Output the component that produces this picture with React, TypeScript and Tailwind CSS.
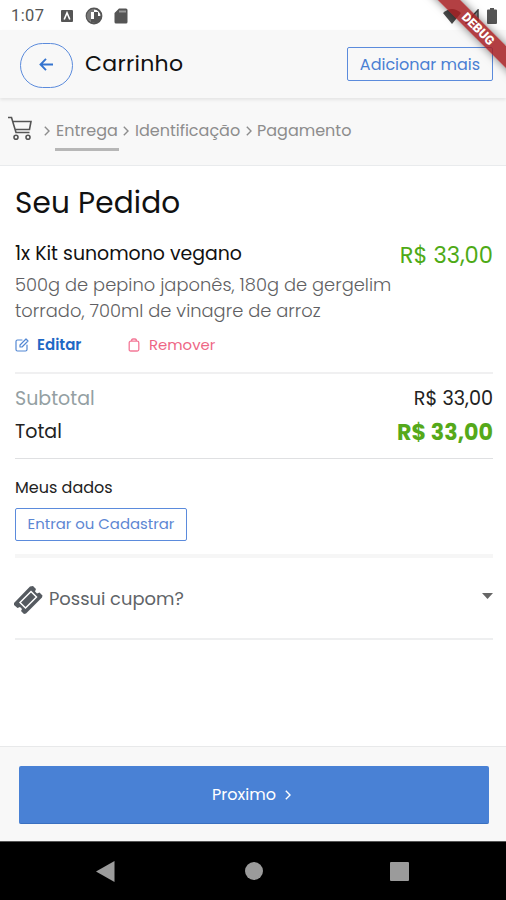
import React from "react";

const Chevron = ({ className = "" }: { className?: string }) => (
  <svg className={className} width="6" height="10" viewBox="0 0 6 10" fill="none" stroke="currentColor" strokeWidth="1.4">
    <path d="M.8.8 5 5 .8 9.2" />
  </svg>
);

function StatusBar() {
  return (
    <div className="flex h-[30px] shrink-0 items-center bg-white pl-[11px] pr-[9px] pt-[2px] text-[#555]">
      <span className="w-[50px] font-['Roboto',sans-serif] text-[16.5px] leading-none tracking-[0.4px]">1:07</span>
      <svg width="12" height="12" viewBox="0 0 12 12">
        <rect width="12" height="12" rx="1" fill="#555" />
        <path d="M3.200 9.500 6 2.800 8.800 9.500" fill="none" stroke="#fff" strokeWidth="1.600" />
      </svg>
      <svg className="ml-[12px]" width="18" height="18" viewBox="0 0 18 18">
        <circle cx="9" cy="9" r="7.400" fill="#fff" stroke="#555" strokeWidth="2" />
        <path d="M9 2a7 7 0 0 0-5.500 11.500L6 14V5h3z" fill="#777" />
        <path d="M9 5h4v4H9z" fill="#555" />
        <path d="M9 9h7q-.5 5-5 7l-5-.5V12h3z" fill="#555" />
      </svg>
      <svg className="ml-[11px]" width="14" height="16" viewBox="0 0 14 16">
        <path d="M5 .5h7a1.500 1.500 0 0 1 1.500 1.500v12a1.500 1.500 0 0 1-1.500 1.500H2A1.500 1.500 0 0 1 .5 14V5z" fill="#555" />
        <path d="M5 3.500h7" stroke="#999" strokeWidth="2" />
      </svg>
      <svg className="ml-auto" width="18" height="15" viewBox="0 0 18 15">
        <path d="M0 4Q9-4 18 4L9 15z" fill="#4a4a4a" />
      </svg>
      <svg className="ml-[4px]" width="14" height="15" viewBox="0 0 14 15">
        <path d="M13 1v13H1z" fill="#999" stroke="#444" strokeWidth="1.500" />
      </svg>
      <svg className="ml-[8px]" width="10" height="16" viewBox="0 0 10 16">
        <path d="M3 0h4v1.500h2q1 0 1 1V15q0 1-1 1H1q-1 0-1-1V2.500q0-1 1-1h2z" fill="#555" />
      </svg>
    </div>
  );
}

function Header() {
  return (
    <header className="relative z-10 flex h-[68px] shrink-0 items-center bg-[#f8f8f8] pl-5 pr-[13px] shadow-[0_2px_3px_rgba(0,0,0,0.08)]">
      <button className="mt-[3px] flex h-[45px] w-[53px] items-center justify-center rounded-full border border-[#5b8bdc] pb-[2px] pr-[2px] text-[#3574cf]">
        <svg width="14" height="13" viewBox="0 0 14 13" fill="none" stroke="currentColor" strokeWidth="1.900">
          <path d="M14 6.500H1.500M7 .8 1.500 6.500 7 12.200" />
        </svg>
      </button>
      <h1 className="ml-[12px] text-[22px] leading-none tracking-[0.3px] text-[#111]">Carrinho</h1>
      <button className="ml-auto h-[34px] w-[146px] rounded-[2px] border border-[#5b8bdc] pt-[2px] text-[16px] leading-none text-[#4a7fd3]">
        Adicionar mais
      </button>
    </header>
  );
}

function Steps() {
  return (
    <nav className="flex h-[68px] shrink-0 items-center border-b border-[#e9ebed] bg-[#f8f8f8] pl-2 text-[16px] leading-none text-[#8d8d8d]">
      <svg className="mb-[6px]" width="25" height="25" viewBox="0 0 25 25" fill="none" stroke="#555" strokeWidth="1.600">
        <path d="M0 1.500h3.500l4.500 15h13.500M5 5.500h18l-1.500 8H7.200" />
        <circle cx="8" cy="21.300" r="2" />
        <circle cx="20" cy="21.300" r="2" />
      </svg>
      <Chevron className="mb-[2px] ml-[11px]" />
      <span className="ml-[5px] flex h-[39px] w-[64px] items-center border-b-[3px] border-[#b7b7b7] pt-px pl-px">Entrega</span>
      <Chevron className="mb-[2px] ml-[4px]" />
      <span className="mb-px ml-[6px] w-[106px]">Identificação</span>
      <Chevron className="mb-[2px] ml-[5px]" />
      <span className="mb-px ml-[5px]">Pagamento</span>
    </nav>
  );
}

function Order() {
  return (
    <section className="flex h-[208px] flex-col border-b-2 border-[#f0f0f1]">
      <h2 className="mt-[20px] text-[29.5px] leading-[34px] tracking-[0.15px] text-[#111]">Seu Pedido</h2>
      <div className="mt-[20px] flex items-start justify-between">
        <h3 className="pt-px text-[18.9px] leading-[26px] text-[#111]">1x Kit sunomono vegano</h3>
        <span className="mt-[2px] text-[22.6px] leading-[26px] text-[#4eaa16]">R$ 33,00</span>
      </div>
      <p className="mt-[4px] whitespace-nowrap text-[17.850px] font-light leading-[26px] tracking-[0.02px] text-[#5f5f63]">
        500g de pepino japonês, 180g de gergelim
        <br />
        torrado, 700ml de vinagre de arroz
      </p>
      <div className="mt-[12px] flex items-center text-[15px] leading-[16px]">
        <svg width="14" height="14" viewBox="0 0 14 14" fill="none" stroke="#5287d3" strokeWidth="1.200" strokeLinecap="round" strokeLinejoin="round">
          <path d="M7 2H2.500Q1 2 1 3.500v8Q1 13 2.500 13h8q1.500 0 1.500-1.500V7M5 9V7l6-6 2 2-6 6z" />
        </svg>
        <span className="ml-[8px] w-[91px] pt-px text-[15px] font-semibold text-[#1f68c5]">Editar</span>
        <svg width="12" height="14" viewBox="0 0 12 14" fill="none" stroke="#f47998" strokeWidth="1.300" strokeLinejoin="round">
          <path d="M3.500 3.200q0-2.200 1.500-2.200h2q1.500 0 1.500 2.200M1.200 4.800q0-1.600 1.600-1.600h6.400q1.600 0 1.600 1.600v6.700q0 1.500-1.500 1.500H2.700q-1.500 0-1.500-1.500z" />
        </svg>
        <span className="ml-[9px] pt-px text-[14.900px] text-[#ee6685]">Remover</span>
      </div>
    </section>
  );
}

function Totals() {
  return (
    <section className="flex h-[85px] flex-col border-b border-[#dfe0e2] pt-[11px]">
      <div className="flex h-[28px] items-center justify-between">
        <span className="text-[19px] text-[#949fa3]">Subtotal</span>
        <span className="text-[19.200px] text-[#222]">R$ 33,00</span>
      </div>
      <div className="mt-[5px] flex h-[28px] items-center justify-between">
        <span className="text-[19px] text-[#222]">Total</span>
        <span className="mt-[2px] text-[22.200px] font-bold text-[#55a91a]">R$ 33,00</span>
      </div>
    </section>
  );
}

export default function App() {
  return (
    <div className="relative flex h-[900px] w-[506px] flex-col overflow-hidden bg-white font-['Poppins','Inter',sans-serif] [font-feature-settings:'cv11']">
      <StatusBar />
      <Header />
      <Steps />
      <main className="flex flex-1 flex-col pl-[15px] pr-[13px]">
        <Order />
        <Totals />
        <section className="flex h-[99px] flex-col items-start border-b-4 border-[#f6f6f6] pt-[18px]">
          <h4 className="text-[16px] leading-[22px] text-[#222]">Meus dados</h4>
          <button className="mt-[9px] h-[33px] w-[172px] rounded-[2px] border border-[#5b8bdc] pb-px text-[14.900px] leading-none text-[#5d87d3]">
            Entrar ou Cadastrar
          </button>
        </section>
        <section className="-ml-[2px] flex h-[80px] items-center pt-[3px] text-[#555a60]">
          <svg width="30" height="30" viewBox="0 0 30 30">
            <path d="M1 18 17 1.500 20 1l3 3-1 2.500 2 2 2.500-1 3 3-.5 2L13 28.500l-2 .5-3-3 1-2-2-2-2.500 1L1 20z" fill="currentColor" />
            <path d="M7 17.500 18 6.500l5.500 5.500-11 11z" fill="none" stroke="#fff" strokeWidth="1.500" />
          </svg>
          <span className="ml-[6px] text-[17.900px] text-[#606468]">Possui cupom?</span>
          <svg className="mb-[7px] ml-auto" width="11" height="6" viewBox="0 0 11 6">
            <path d="M0 0h11L5.500 6z" fill="#666" />
          </svg>
        </section>
        <div className="h-[2px] bg-[#eeeff0]" />
      </main>
      <footer className="h-[95px] shrink-0 border-t border-[#e8e9ea] bg-[#f8f8f8] pl-[19px] pr-[17px] pt-[19px]">
        <button className="flex h-[58px] w-full items-center justify-center rounded-[2px] border-b border-[#3a70c0] bg-[#4981d5] pr-[5px] pt-px text-[16px] text-white">
          Proximo <Chevron className="mb-px ml-[9px]" />
        </button>
      </footer>
      <div className="flex h-[59px] shrink-0 items-center border-t border-[#555] bg-black">
        <svg className="ml-[96px]" width="19" height="21" viewBox="0 0 19 21">
          <path d="M18.500 0v21L0 10.500z" fill="#9b9b9b" />
        </svg>
        <div className="ml-[130px] size-[18px] rounded-full bg-[#9b9b9b]" />
        <div className="ml-[127px] size-[19px] rounded-[1px] bg-[#9b9b9b]" />
      </div>
      <div className="absolute left-[411px] top-[21px] z-20 flex h-[16px] w-[134px] rotate-45 items-center justify-center bg-[#a61e22]/85 font-['Roboto',sans-serif] text-[12.500px] font-black leading-none text-white shadow-[0_0_8px_rgba(0,0,0,0.5)]">
        DEBUG
      </div>
    </div>
  );
}
